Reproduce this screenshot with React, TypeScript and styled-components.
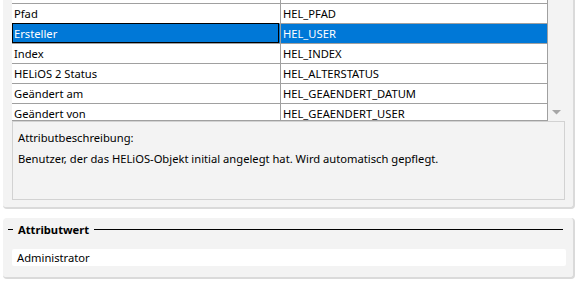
import * as React from "react";
import styled, { createGlobalStyle } from "styled-components";

const colors = {
  panel: "#f3f3f3",
  panelEdge: "#dadada",
  grid: "#a0a0a0",
  boxEdge: "#d2d2d2",
  selected: "#0078d7",
  text: "#000000",
};

const fontText = `"Noto Sans", "Open Sans", sans-serif`;

const GlobalStyle = createGlobalStyle`
  html, body {
    margin: 0;
    padding: 0;
    background: #ffffff;
  }
  body {
    font-family: ${fontText};
    font-size: 11.2px;
    color: ${colors.text};
  }
`;

type Attribute = {
  label: string;
  key: string;
};

// first entry is the row scrolled above the viewport, only its bottom line shows
const attributes: Attribute[] = [
  { label: "", key: "" },
  { label: "Pfad", key: "HEL_PFAD" },
  { label: "Ersteller", key: "HEL_USER" },
  { label: "Index", key: "HEL_INDEX" },
  { label: "HELiOS 2 Status", key: "HEL_ALTERSTATUS" },
  { label: "Geändert am", key: "HEL_GEAENDERT_DATUM" },
  { label: "Geändert von", key: "HEL_GEAENDERT_USER" },
];

const Screen = styled.div`
  display: flex;
  flex-direction: column;
  gap: 9px;
  width: 581px;
  padding-left: 3px;
  box-sizing: border-box;
`;

const Panel = styled.section<{ $open?: boolean }>`
  width: 572px;
  box-sizing: border-box;
  background: ${colors.panel};
  border-right: 2px solid ${colors.panelEdge};
  border-bottom: 2px solid ${colors.panelEdge};
  border-radius: ${(p) => (p.$open ? "0 0 4px 4px" : "4px")};
`;

// upper panel: attribute list + description
const AttributePanel = styled(Panel)`
  padding: 0 7px 7px 9px;
`;

const ListRow = styled.div`
  display: flex;
  height: 121px;
`;

const GridViewport = styled.div`
  width: 536px;
  height: 120px;
  overflow: hidden;
  background: #ffffff;
  border-bottom: 1px solid ${colors.grid};
`;

const GridTable = styled.div`
  margin-top: -16px;
`;

const GridRow = styled.div`
  display: grid;
  grid-template-columns: 269px 267px;
  height: 20px;
`;

const Cell = styled.div<{ $selected?: boolean; $focus?: boolean }>`
  position: relative;
  box-sizing: border-box;
  height: 20px;
  padding: 0 2px;
  line-height: 19px;
  white-space: nowrap;
  border-right: 1px solid ${colors.grid};
  border-bottom: 1px solid ${colors.grid};
  background: ${(p) => (p.$selected ? colors.selected : "#ffffff")};
  color: ${(p) => (p.$selected ? "#ffffff" : colors.text)};

  ${(p) =>
    p.$focus &&
    `
    &::after {
      content: "";
      position: absolute;
      top: -1px;
      left: 0;
      right: 1px;
      bottom: 0;
      border: 1px solid #000000;
    }
  `}
`;

const ScrollTrack = styled.div`
  width: 17px;
  height: 121px;
  display: flex;
  align-items: flex-end;
  justify-content: center;
  padding-bottom: 6px;
  box-sizing: border-box;
`;

const DescriptionBox = styled.div`
  width: 553px;
  height: 79px;
  box-sizing: border-box;
  padding: 5px 5px 4px;
  border: 1px solid ${colors.boxEdge};
  background: ${colors.panel};
  line-height: 21px;
`;

const DescriptionTitle = styled.div``;

const DescriptionText = styled.div``;

// lower panel: attribute value
const ValuePanel = styled(Panel)`
  height: 61px;
  padding: 3px 0 0 0;
`;

const Legend = styled.div`
  display: flex;
  align-items: center;
  gap: 5px;
  padding: 0 10px 0 5px;
  height: 17px;
`;

const Rule = styled.div<{ $short?: boolean }>`
  height: 1px;
  background: #000000;
  ${(p) => (p.$short ? "width: 5px;" : "flex: 1;")}
`;

const LegendText = styled.span`
  font-weight: bold;
`;

const ValueField = styled.div`
  margin: 11px 7px 0 9px;
  height: 17px;
  line-height: 17px;
  padding: 0 5px;
  background: #ffffff;
  border-radius: 2px;
`;

const ScrollArrow = () => (
  <svg width="9" height="5" viewBox="0 0 9 5">
    <path d="M0 0 H9 L4.5 4.5 Z" fill="#a6a6a6" />
  </svg>
);

export default function App() {
  const selectedKey = "HEL_USER";
  return (
    <>
      <GlobalStyle />
      <Screen>
        <AttributePanel $open>
          <ListRow>
            <GridViewport>
              <GridTable>
                {attributes.map((a, i) => {
                  const sel = a.key === selectedKey;
                  return (
                    <GridRow key={i}>
                      <Cell $selected={sel} $focus={sel}>
                        {a.label}
                      </Cell>
                      <Cell $selected={sel}>{a.key}</Cell>
                    </GridRow>
                  );
                })}
              </GridTable>
            </GridViewport>
            <ScrollTrack>
              <ScrollArrow />
            </ScrollTrack>
          </ListRow>
          <DescriptionBox>
            <DescriptionTitle>Attributbeschreibung:</DescriptionTitle>
            <DescriptionText>
              Benutzer, der das HELiOS-Objekt initial angelegt hat. Wird automatisch gepflegt.
            </DescriptionText>
          </DescriptionBox>
        </AttributePanel>
        <ValuePanel>
          <Legend>
            <Rule $short />
            <LegendText>Attributwert</LegendText>
            <Rule />
          </Legend>
          <ValueField>Administrator</ValueField>
        </ValuePanel>
      </Screen>
    </>
  );
}
